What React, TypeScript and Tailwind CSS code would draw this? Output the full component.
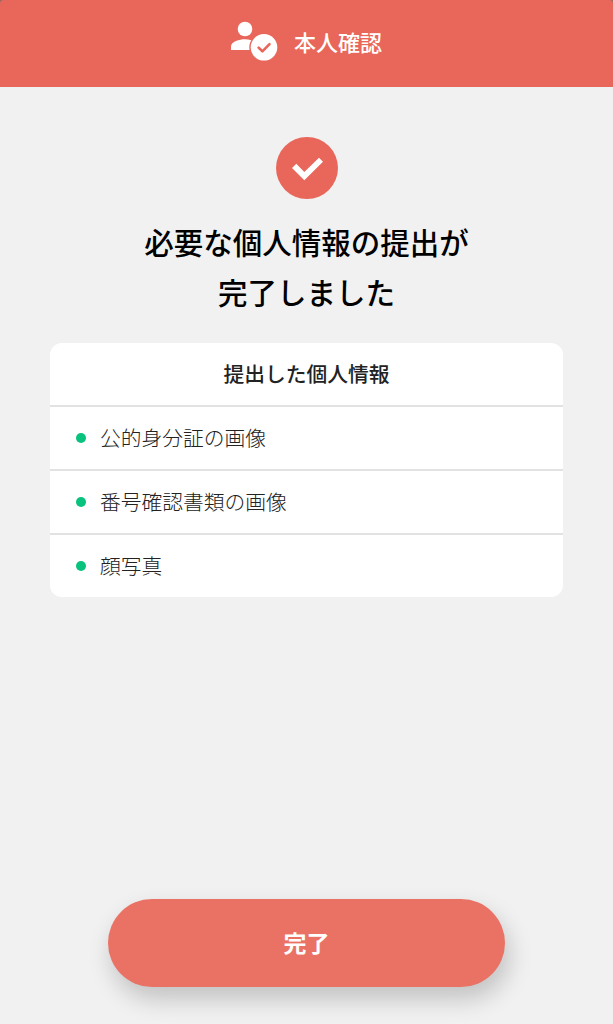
import React from 'react';

const submittedItems = ['公的身分証の画像', '番号確認書類の画像', '顔写真'];

const IdentityIcon: React.FC = () => (
  <svg className="h-[40px] w-[47px]" viewBox="0 0 47 40" fill="none">
    <circle cx="14" cy="8" r="7.3" fill="white" />
    <path d="M0 29v-3.500c0-4.800 8.500-7.200 14-7.200 2 0 4.200.3 6.300.9-1.700 2.600-2.400 6.100-1.800 9.800z" fill="white" />
    <circle cx="33" cy="26.300" r="13.300" fill="white" />
    <path
      d="M27.600 26.600l3.800 3.700 7.100-7.100"
      stroke="#e8665a"
      strokeWidth="2.600"
      strokeLinecap="round"
      strokeLinejoin="round"
    />
  </svg>
);

const App: React.FC = () => {
  return (
    <div className="flex h-[1024px] w-full flex-col items-center bg-[#f1f1f1] font-['Noto_Sans_CJK_JP',sans-serif]">
      <div className="w-full shrink-0 bg-[#9a6a65]">
        <header className="flex h-[87px] w-full items-center justify-center gap-4 rounded-t-[4px] bg-[#e8665a] pb-[5px] text-white">
          <IdentityIcon />
          <span className="text-[22px] leading-8 font-medium">本人確認</span>
        </header>
      </div>

      <svg className="mt-[50px] ml-px h-[62px] w-[62px] shrink-0" viewBox="0 0 62 62" fill="none">
        <circle cx="31" cy="31" r="31" fill="#e8665a" />
        <path d="M16 31l4.300-4.300 8 8.300L43 20.700l4 4-18.700 18.600z" fill="white" />
      </svg>

      <h1 className="mt-[17px] text-center text-[29.500px] leading-[50px] font-medium text-black">
        必要な個人情報の提出が
        <br />
        完了しました
      </h1>

      <section className="mt-[27px] w-[513px] overflow-hidden rounded-xl bg-white text-[#222]">
        <h2 className="flex h-[62px] items-center justify-center text-[20.750px] font-medium">提出した個人情報</h2>
        <ul>
          {submittedItems.map((item) => (
            <li
              key={item}
              className="flex h-16 items-center gap-[14px] border-t-2 border-[#e2e2e2] pl-[26px] text-[20.750px] font-light"
            >
              <span className="h-[10px] w-[10px] rounded-full bg-[#08c27d]" />
              {item}
            </li>
          ))}
        </ul>
      </section>

      <button className="mt-auto mb-[37px] h-[88px] w-[397px] shrink-0 rounded-full bg-[#ea7265] pb-[2px] text-[23px] font-bold text-white shadow-[4px_12px_24px_rgba(0,0,0,0.2)]">
        完了
      </button>
    </div>
  );
};

export default App;
